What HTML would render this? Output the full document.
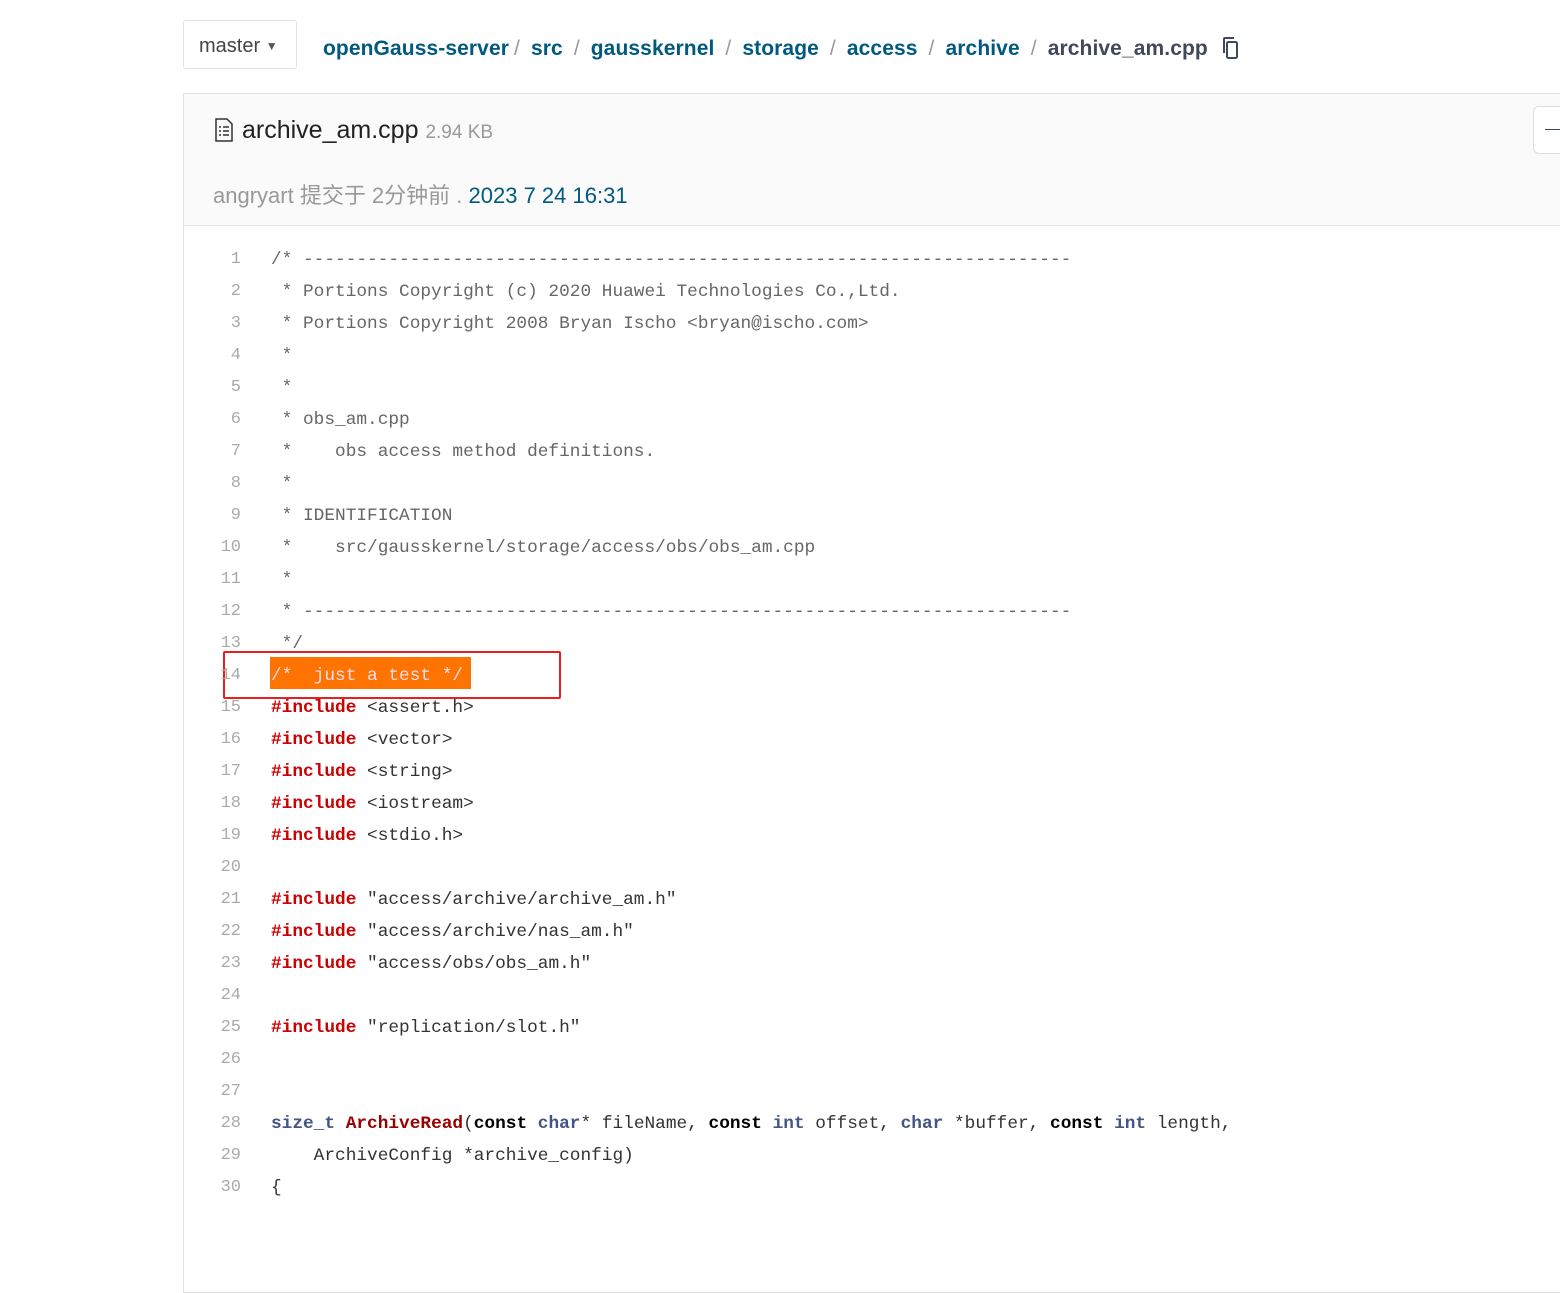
<!DOCTYPE html>
<html><head><meta charset="utf-8">
<style>
body{margin:0;width:1560px;height:1204px;overflow:hidden;background:#fff;font-family:"Liberation Sans","Noto Sans CJK SC",sans-serif;position:relative}
.abs{position:absolute}
.btn{left:183px;top:20px;width:114px;height:49px;border:1px solid #e3e3e3;border-radius:3px;box-sizing:border-box;font-size:20px;color:#444;line-height:50px;padding-left:15px}
.crumb{left:323px;top:36px;font-size:21px;font-weight:bold;color:#005980;white-space:nowrap;letter-spacing:0.1px}
.crumb .s{color:#999;font-weight:normal;margin:0 11px}
.panel{left:183px;top:93px;width:1400px;height:1200px;border:1px solid #e3e3e3;box-sizing:border-box}
.head{left:184px;top:94px;width:1376px;height:131px;background:#fafafa;border-bottom:1px solid #e6e6e6}
.code{left:184px;top:250px;font-family:"Liberation Mono",monospace;font-size:17.8px;white-space:pre}
.ln{position:absolute;left:0;width:57px;text-align:right;color:#aaa;font-size:17px}
.tx{position:absolute;left:87px;color:#333}
.c{color:#666}
.k{color:#c00;font-weight:bold}
.t{color:#445588;font-weight:bold}
.b{color:#000;font-weight:bold}
.f{color:#990000;font-weight:bold}
</style></head><body>
<div class="abs btn">master <span style="font-size:12px;vertical-align:2px;color:#555">&#9660;</span></div>
<div class="abs crumb">openGauss-server<span class="s" style="margin-left:5px">/</span>src<span class="s">/</span>gausskernel<span class="s">/</span>storage<span class="s">/</span>access<span class="s">/</span>archive<span class="s">/</span><span style="color:#40485b">archive_am.cpp</span>
<svg width="20" height="24" viewBox="0 0 20 24" style="vertical-align:-5px;margin-left:6px"><path d="M4 17V3a1 1 0 0 1 1-1h9" fill="none" stroke="#40485b" stroke-width="2"/><rect x="7" y="6" width="10" height="16" rx="1.5" fill="none" stroke="#40485b" stroke-width="2"/></svg></div>
<div class="abs panel"></div>
<div class="abs head"></div>
<svg class="abs" style="left:214px;top:118px" width="20" height="24" viewBox="0 0 20 24"><path d="M2 1h11l5 5v17H2z" fill="none" stroke="#333" stroke-width="1.5"/><circle cx="6" cy="9" r="1" fill="#333"/><circle cx="6" cy="13" r="1" fill="#333"/><circle cx="6" cy="17" r="1" fill="#333"/><path d="M9 9h6M9 13h6M9 17h6" stroke="#333" stroke-width="1.5"/></svg>
<div class="abs" style="left:242px;top:116px;font-size:25px;color:#222">archive_am.cpp <span style="font-size:19px;color:#999">2.94 KB</span></div>
<div class="abs" style="left:213px;top:178px;font-size:22px;color:#999">angryart 提交于 2分钟前 . <span style="color:#005980">2023 7 24 16:31</span></div>
<div class="abs" style="left:1533px;top:106px;width:40px;height:46px;border:1px solid #ddd;border-radius:6px;background:#fff"></div>
<div class="abs" style="left:1545px;top:129px;width:15px;height:1px;background:#40485b"></div>
<div class="abs" style="left:270px;top:657px;width:201px;height:32px;background:#ff7300"></div>
<div class="abs" style="left:223px;top:651px;width:334px;height:44px;border:2px solid #e62020;border-radius:2px"></div>
<div class="abs code">
<div style="position:absolute;top:0"><span class="ln">1</span><span class="tx c">/* ------------------------------------------------------------------------</span></div>
<div style="position:absolute;top:32px"><span class="ln">2</span><span class="tx c"> * Portions Copyright (c) 2020 Huawei Technologies Co.,Ltd.</span></div>
<div style="position:absolute;top:64px"><span class="ln">3</span><span class="tx c"> * Portions Copyright 2008 Bryan Ischo &lt;bryan@ischo.com&gt;</span></div>
<div style="position:absolute;top:96px"><span class="ln">4</span><span class="tx c"> *</span></div>
<div style="position:absolute;top:128px"><span class="ln">5</span><span class="tx c"> *</span></div>
<div style="position:absolute;top:160px"><span class="ln">6</span><span class="tx c"> * obs_am.cpp</span></div>
<div style="position:absolute;top:192px"><span class="ln">7</span><span class="tx c"> *    obs access method definitions.</span></div>
<div style="position:absolute;top:224px"><span class="ln">8</span><span class="tx c"> *</span></div>
<div style="position:absolute;top:256px"><span class="ln">9</span><span class="tx c"> * IDENTIFICATION</span></div>
<div style="position:absolute;top:288px"><span class="ln">10</span><span class="tx c"> *    src/gausskernel/storage/access/obs/obs_am.cpp</span></div>
<div style="position:absolute;top:320px"><span class="ln">11</span><span class="tx c"> *</span></div>
<div style="position:absolute;top:352px"><span class="ln">12</span><span class="tx c"> * ------------------------------------------------------------------------</span></div>
<div style="position:absolute;top:384px"><span class="ln">13</span><span class="tx c"> */</span></div>
<div style="position:absolute;top:416px"><span class="ln">14</span><span class="tx" style="color:#fde">/*  just a test */</span></div>
<div style="position:absolute;top:448px"><span class="ln">15</span><span class="tx"><span class="k">#include</span> &lt;assert.h&gt;</span></div>
<div style="position:absolute;top:480px"><span class="ln">16</span><span class="tx"><span class="k">#include</span> &lt;vector&gt;</span></div>
<div style="position:absolute;top:512px"><span class="ln">17</span><span class="tx"><span class="k">#include</span> &lt;string&gt;</span></div>
<div style="position:absolute;top:544px"><span class="ln">18</span><span class="tx"><span class="k">#include</span> &lt;iostream&gt;</span></div>
<div style="position:absolute;top:576px"><span class="ln">19</span><span class="tx"><span class="k">#include</span> &lt;stdio.h&gt;</span></div>
<div style="position:absolute;top:608px"><span class="ln">20</span></div>
<div style="position:absolute;top:640px"><span class="ln">21</span><span class="tx"><span class="k">#include</span> "access/archive/archive_am.h"</span></div>
<div style="position:absolute;top:672px"><span class="ln">22</span><span class="tx"><span class="k">#include</span> "access/archive/nas_am.h"</span></div>
<div style="position:absolute;top:704px"><span class="ln">23</span><span class="tx"><span class="k">#include</span> "access/obs/obs_am.h"</span></div>
<div style="position:absolute;top:736px"><span class="ln">24</span></div>
<div style="position:absolute;top:768px"><span class="ln">25</span><span class="tx"><span class="k">#include</span> "replication/slot.h"</span></div>
<div style="position:absolute;top:800px"><span class="ln">26</span></div>
<div style="position:absolute;top:832px"><span class="ln">27</span></div>
<div style="position:absolute;top:864px"><span class="ln">28</span><span class="tx"><span class="t">size_t</span> <span class="f">ArchiveRead</span>(<span class="b">const</span> <span class="t">char</span>* fileName, <span class="b">const</span> <span class="t">int</span> offset, <span class="t">char</span> *buffer, <span class="b">const</span> <span class="t">int</span> length,</span></div>
<div style="position:absolute;top:896px"><span class="ln">29</span><span class="tx">    ArchiveConfig *archive_config)</span></div>
<div style="position:absolute;top:928px"><span class="ln">30</span><span class="tx">{</span></div>
</div>
</body></html>
